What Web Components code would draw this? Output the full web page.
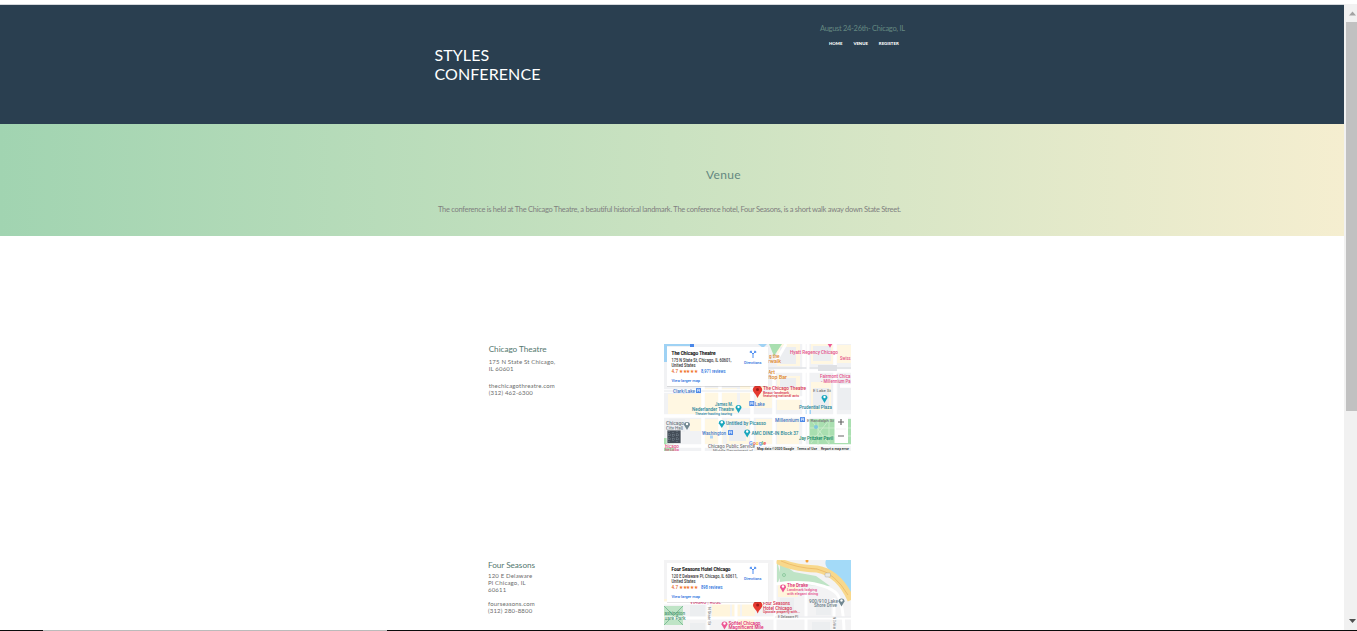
<!DOCTYPE html>
<html lang="en">
<head>
<meta charset="utf-8">
<title>Styles Conference</title>
<style>
html,body{margin:0;height:100%;overflow:hidden;background:#fff;font-family:Lato,"Liberation Sans",sans-serif}
</style>
</head>
<body>
<conference-page></conference-page>
<script>
const define=(name,html,after)=>customElements.define(name,class extends HTMLElement{
  constructor(){super();this.attachShadow({mode:'open'}).innerHTML=html;if(after)after(this);}
});

define('site-header',`<style>
:host{display:flex;justify-content:space-between;box-sizing:border-box;height:120px;flex:none;background:#2a3f50;border-top:1px solid #d5d8dc;padding:0 440px 0 434.500px}
h1{margin:40px 0 0;font:400 16px/19px Lato,sans-serif;color:#fff;width:112px;letter-spacing:.08px}
.side{width:85px;margin-top:19px;margin-right:-1px}
p{margin:0;font-size:7.5px;line-height:9px;color:#648880;white-space:nowrap;letter-spacing:-.3px}
nav{display:flex;gap:11px;margin:8px 0 0 9px;font-size:4.3px;line-height:6px;font-weight:900;color:#fff}
</style><h1>STYLES CONFERENCE</h1><div class="side"><p>August 24-26th- Chicago, IL</p><nav><span>HOME</span><span>VENUE</span><span>REGISTER</span></nav></div>`);

define('venue-hero',`<style>
:host{display:block;box-sizing:border-box;height:112px;flex:none;background:linear-gradient(90deg,#a1d4b1,#cae2c1 50%,#f5eed0);padding-top:43px}
h2{margin:0 0 0 706px;font-weight:400;font-size:12px;line-height:16px;color:#648880;letter-spacing:.35px}
p{margin:22px 0 0 438px;font-size:7.5px;line-height:10px;color:#808080;white-space:nowrap;letter-spacing:-.28px}
</style><h2>Venue</h2><p>The conference is held at The Chicago Theatre, a beautiful historical landmark. The conference hotel, Four Seasons, is a short walk away down State Street.</p>`);

define('venue-row',`<style>
:host{display:grid;grid-template-columns:176px 187px;margin-left:488px;height:216px;flex:none}
::slotted(h3){margin:0 0 3px;font-weight:400;font-size:8.2px;line-height:11px;color:#54786f;white-space:nowrap;letter-spacing:-.04px}
::slotted(p){margin:0 0 10px;font-size:6px;line-height:7px;color:#6c6c6c;white-space:nowrap;letter-spacing:.18px}
.text{padding-left:var(--indent,0)}
.map{height:107px}
</style><div class="text"><slot></slot></div><div class="map"><slot name="map"></slot></div>`);

define('scroll-bar',`<style>
:host{display:flex;flex-direction:column;align-items:center;width:13px;flex:none;background:#f1f1f1}
svg{display:block;height:17px;width:13px;flex:none}
i{width:11px;height:389px;background:#c1c1c1;margin-left:1px}
.gap{flex:1}
</style><svg viewBox="0 0 13 17" style="height:18px"><path d="M5 11h7L8.500 7z" fill="#a3a3a3"/></svg><i></i><div class="gap"></div><svg viewBox="0 0 13 17"><path d="M5 6h7L8.500 10z" fill="#505050"/></svg>`);

const t=(x,y,w,s,size=4.5,c='#24859a',extra='')=>`<text x="${x}" y="${y}" textLength="${w}" lengthAdjust="spacingAndGlyphs" font-size="${size}" fill="${c}" ${extra}>${s}</text>`;
const pin=(x,y,c,r=3)=>`<path d="M${x} ${y+r*1.8}Q${x-r*.5} ${y+r} ${x-r} ${y+r*.2}A${r} ${r} 0 1 1 ${x+r} ${y+r*.2}Q${x+r*.5} ${y+r} ${x} ${y+r*1.8}" fill="${c}"/><circle cx="${x}" cy="${y-r*.15}" r="${r*.4}" fill="#fff"/>`;
const bigPin=(x,y)=>`<path d="M${x} ${y+8}Q${x-1.2} ${y+5} ${x-3.4} ${y+2.8}A4.500 4.500 0 1 1 ${x+3.4} ${y+2.8}Q${x+1.2} ${y+5} ${x} ${y+8}" fill="#e5392f"/><circle cx="${x}" cy="${y-.4}" r="1.500" fill="#9b1c18"/>`;
const station=(x,y)=>`<rect x="${x}" y="${y}" width="5" height="5" rx=".5" fill="#4a87e8"/><path d="M${x+1.4} ${y+3.9}v-2.700h2.200v2.700M${x+1.4} ${y+2.6}h2.200" fill="none" stroke="#fff" stroke-width=".6"/>`;
const roads=(d,w,c='#fff')=>`<path d="${d}" fill="none" stroke="${c}" stroke-width="${w}"/>`;
const rects=(list,c)=>list.map(([x,y,w,h])=>`<rect x="${x}" y="${y}" width="${w}" height="${h}" fill="${c}"/>`).join('');
const card=(y,name,nw,addr,aw,reviews)=>`<rect x="667" y="${y+.3}" width="101.500" height="39.500" fill="#0002"/><rect x="667" y="${y}" width="101.500" height="39" fill="#fff"/>
${t(671.5,y+8,nw,name,5.2,'#111','stroke="#111" stroke-width=".15"')}
${t(671.5,y+14.8,aw,addr,4.5,'#333')}${t(671.5,y+20,24,'United States',4.5,'#333')}
${t(671.5,y+26.2,6.500,'4.7',5.2,'#e7611b')}${t(679,y+26,18.5,'★★★★★',4.7,'#f0742a')}${t(701,y+26,reviews[1],reviews[0],4.5,'#2870dd')}
${t(671.5,y+35.2,28.5,'View larger map',4.4,'#2870dd')}
<path d="M753 ${y+11}v-4l-2.500-2.500m2.500 2.500l2.500-2.500M750.300 ${y+6}v-1.700h1.700M754 ${y+4.300}h1.700v1.700" fill="none" stroke="#4c8df0" stroke-width="1"/>
${t(744,y+16.8,17.5,'Directions',4.3,'#2870dd')}`;

const mapOne=`<rect x="664" y="344" width="187" height="107" fill="#f1f2f4"/>
${rects([[740,386,12,22],[756,386,16,22],[777,344,23,22],[777,376,23,34],[722,388,15,25],[705,388,14,25],[668,394,34,20],[705,419,18,25],[727,419,22,25],[756,419,16,25],[777,419,22,25],[811,382,20,28],[811,344,22,20],[837,345,14,18],[690,419,11,12]],'#fff7e2')}
${rects([[780,347,16,17],[780,378,16,10],[813,346,18,15],[838,379,13,31],[669,419,16,13],[813,388,16,20],[729,421,17,20]],'#eceef1')}
<path d="M664 344h26v2h-26zM664 344h3v18h-3zM758 344h9l-4 4zM805 410h6v4h-6z" fill="#9fd2f4"/>
<rect x="690" y="344" width="4" height="3" fill="#4a87e8"/>
<path d="M769 344h13l-8 12z" fill="#a9dfb0"/><path d="M664 438h10v13h-10zM809 419h42v26h-42z" fill="#a9dfb0"/>
${roads('M775 363L786 344',3)}
${roads('M664 391H780M664 416H851M664 446H851M703 386V451M720 386V451M752 386V451M774 370V451M804 344V451M835 344V415M774 371H851M774 398H804M840 386H851',3.5)}
${roads('M768 368H851',1.5,'#dfe2e6')}${roads('M664 391H774',1,'#e3e6e9')}
${roads('M808 344V440',3)}
${roads('M809 428h42M809 436h42M818 419v26M829 419v26M811 443l18-23M812 421l17 23',.8,'#d1edd0')}
<rect x="818" y="365" width="19" height="6" fill="#dfe1e5"/><circle cx="816" cy="427" r="2" fill="#7ec6df"/>
${t(769,358,10.5,'g the',4.9,'#dc862c')}${t(768,362.5,13,'rwalk',4.9,'#dc862c')}${t(768,374,7,'Art',4.9,'#dc862c')}${t(768,378.5,19,'ftop Bar',4.9,'#dc862c')}
${t(790,353.500,48,'Hyatt Regency Chicago',5,'#e44f88')}${t(840,359.500,10.5,'Swiss',4.8,'#e44f88')}${pin(830,343,'#ed5794',2.6)}
${t(820,378,30.5,'Fairmont Chica',4.9,'#e44f88')}${t(821,383,29.5,'- Millennium Pa',4.9,'#e44f88')}
${t(673,393,22,'Clark/Lake',4.8,'#3f77c9')}${station(696,388)}
${bigPin(757.5,390)}
${t(763,389.800,43,'The Chicago Theatre',5,'#d6304f')}${t(763,393.7,27,'Beaux-landmark,',4.1,'#d6304f')}${t(763,397.200,36,'featuring national acts',4.1,'#d6304f')}
${t(813,391.500,18,'E Lake St',3.4,'#777')}${pin(824.5,397.5,'#18a6bd')}
${t(715,406,18,'James M.',4.9)}${t(692,410.500,42,'Nederlander Theatre',4.9)}${t(695,415,37,'Theater hosting touring',4)}${pin(738.5,407.5,'#18a6bd')}
${station(749.3,401)}${t(754.8,405.5,10,'Lake',4.8,'#3f77c9')}
${t(799,409,33,'Prudential Plaza',4.9)}${t(775,422,24,'Millennium',4.9,'#3f77c9')}${station(800,417)}${t(807,422,27,'E Randolph St',4,'#777')}
${t(666,424.500,18,'Chicago',4.8,'#6c7983')}${t(666,429.500,17,'City Hall',4.8,'#6c7983')}${pin(687,424.5,'#718791')}
${pin(721.8,422.7,'#18a6bd')}${t(726,425,40,'Untitled by Picasso',4.8)}
${t(702,435,24,'Washington',4.8,'#3f77c9')}${station(728,430)}<rect x="710" y="435.500" width="3" height="3" fill="#add4f5"/>
${pin(747.2,432,'#18a6bd')}${t(751.5,434.500,47,'AMC DINE-IN Block 37',4.9)}
${t(799,440,34,'Jay Pritzker Pavil',4.9,'#168465')}
${t(708,448,47,'Chicago Public Service',4.5,'#777')}${t(713,452,40,'Middle Department of',4,'#888')}
<rect x="667" y="430" width="14" height="13.500" fill="#444d58" stroke="#fff" stroke-width=".7"/>
<path d="M669 431v11M673 432v9M677 431v11M668 435h12M668 439h12" stroke="#8795a0" stroke-width=".7" stroke-dasharray="1 1"/>
${t(665,447.5,14,'hicago',4.5,'#e05285')}${t(665,451,14,'he Loop',4.3,'#e05285')}
<rect x="834.500" y="415" width="13.500" height="28" fill="#fff"/><path d="M838 422h6M841 419v6M838 436h6" stroke="#666" stroke-width="1.200"/><path d="M836 429h10" stroke="#e6e6e6" stroke-width=".5"/>
<text x="749" y="444.500" textLength="17" lengthAdjust="spacingAndGlyphs" font-size="5.800"><tspan fill="#4285f4">G</tspan><tspan fill="#ea4335">o</tspan><tspan fill="#fbbc05">o</tspan><tspan fill="#4285f4">g</tspan><tspan fill="#34a853">l</tspan><tspan fill="#ea4335">e</tspan></text>
<rect x="756" y="446" width="95" height="5" fill="#f5f5f5" opacity=".8"/>
${t(757,449.500,37,'Map data ©2020 Google',3.7,'#222')}${t(797,449.500,20,'Terms of Use',3.7,'#222')}${t(821,449.500,28,'Report a map error',3.7,'#222')}
${card(347,'The Chicago Theatre',44,'175 N State St, Chicago, IL 60601,',60,['8,971 reviews',24.5])}`;

const mapTwo=`<rect x="664" y="560" width="187" height="107" fill="#f3f3f4"/>
${rects([[664,599,24,4],[712,602,18,15],[732,602,8,14],[742,602,13,14],[778,583,20,14],[738,619,16,12]],'#fff5dc')}
${rects([[690,605,15,14],[780,598,14,16],[816,603,15,12],[690,623,15,8],[812,622,18,8]],'#eceef0')}
<path d="M826 560h25v38c-5-11-10-18-17-24-7-5-10-9-8-14z" fill="#a3daf8"/>
<path d="M664 606h19v19h-19zM777 561l4 15-4 8zM780 562l14 10 22 4 14 10-24-1-26-2z" fill="#bfe4c6"/>
${roads('M664 606l19 19M664 625l19-19',1,'#80be99')}
${roads('M777 560q13 8 40 9q22 4 34 31',7,'#f8d88c')}${roads('M781 561q16 7 36 8q18 4 31 26',.8,'#ecb865')}
${roads('M664 618H851M664 603H775M708 598V630M736 598V630M775 560V630M806 590V630M834 598V630M775 584q42-5 60 8q8 6 9 38',3)}
${roads('M775 617H851',.8,'#dfe1e4')}
<circle cx="807" cy="561" r="1.500" fill="#f5a238"/><rect x="825" y="573" width="5.500" height="4" rx="1" fill="#eceae2" stroke="#999" stroke-width=".4"/><circle cx="784" cy="575" r="1.500" fill="none" stroke="#6fba86" stroke-width=".6"/>
${pin(783,587,'#ed5794')}${t(787,586.700,21,'The Drake',5,'#e02872')}${t(787,590.500,30,'Landmark lodging',4.4,'#e44f88')}${t(787,594.500,31,'with elegant dining',4.4,'#e44f88')}
${t(690,604,31,'VIAGRO | ROSE',4.5,'#df5288')}
${bigPin(757.7,605.5)}
${t(763,605,27,'Four Seasons',5,'#d6304f')}${t(763,609.500,29,'Hotel Chicago',5,'#d6304f')}${t(763,613.200,37,'Upscale property with...',4.1,'#d6304f')}
${t(809,602.500,29,'900/910 Lake',5,'#6d7d88')}${t(814,606.700,23,'Shore Drive',5,'#6d7d88')}${pin(841.5,601,'#718791')}
${t(778,618,20,'E Delaware Pl',3.5,'#777')}<g transform="rotate(90 708 607)">${t(708,607,18,'N State St',3.4,'#888')}</g><g transform="rotate(90 833 617)">${t(833,617,12,'N DeWitt',3.4,'#888')}</g>
${t(664.5,615,20.5,'ashington',4.8,'#4d9872')}${t(664.5,620,21,'uare Park',4.8,'#4d9872')}
${pin(724.5,624,'#ed5794')}${t(728.5,624.500,32,'Sofitel Chicago',5,'#e02872')}${t(728.5,629.200,35,'Magnificent Mile',5,'#e02872')}
${card(563,'Four Seasons Hotel Chicago',59,'120 E Delaware Pl, Chicago, IL 60611,',66,['898 reviews',21.5])}`;

define('venue-map',`<style>:host{display:block;width:187px;height:107px}svg{display:block;width:187px;height:107px;overflow:hidden;font-family:Roboto,sans-serif;font-weight:500}</style><div></div>`,el=>{
  const two=el.getAttribute('place')==='four-seasons';
  el.shadowRoot.querySelector('div').innerHTML=`<svg viewBox="664 ${two?560:344} 187 107">${two?mapTwo:mapOne}</svg>`;
});

define('task-edge',`<style>:host{display:flex;height:1px;flex:none;background:#0b0b0b}i{margin-left:43px;width:344px;background:#bbb}</style><i></i>`);

define('conference-page',`<style>
:host{display:flex;flex-direction:column;width:1357px;height:631px;overflow:hidden}
.top{height:4px;flex:none}
.body{display:flex;flex:1;min-height:0}
main{width:1344px;display:flex;flex-direction:column;overflow:hidden}
.venues{padding-top:108px}
</style><div class="top"></div><div class="body"><main><site-header></site-header><venue-hero></venue-hero><div class="venues">
<venue-row style="--indent:.7px"><h3>Chicago Theatre</h3><p>175 N State St Chicago,<br>IL 60601</p><p>thechicagothreatre.com<br>(312) 462-6300</p><venue-map slot="map" place="theatre"></venue-map></venue-row>
<venue-row><h3>Four Seasons</h3><p style="margin-top:-2px;margin-bottom:7px">120 E Delaware<br>Pl Chicago, IL<br>60611</p><p>fourseasons.com<br>(312) 280-8800</p><venue-map slot="map" place="four-seasons"></venue-map></venue-row>
</div></main><scroll-bar></scroll-bar></div><task-edge></task-edge>`);
</script>
</body>
</html>
